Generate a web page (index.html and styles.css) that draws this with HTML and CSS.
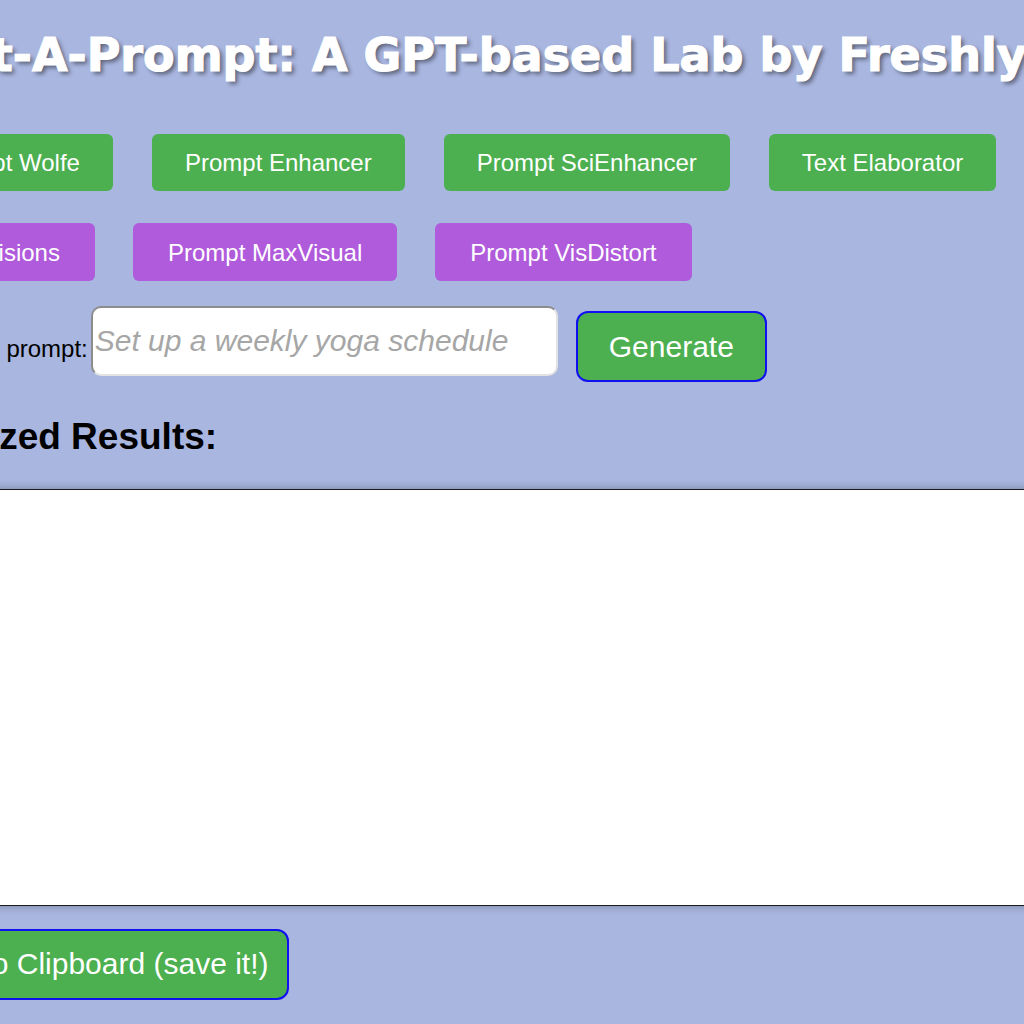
FILE: index.html
```html
<!DOCTYPE html>
<html lang="en">
<head>
  <meta charset="UTF-8" />
  <meta name="viewport" content="width=device-width, initial-scale=1.0"/>
  <title>Prompt-A-Prompt</title>
  <link rel="stylesheet" href="styles.css">
</head>
<body>
  <h1 class="title">Prompt-A-Prompt: A GPT-based Lab by FreshlyAI</h1>

  <div class="tools tools-text">
    <button class="tool-btn green-btn">Prompt Wolfe</button>
    <button class="tool-btn green-btn">Prompt Enhancer</button>
    <button class="tool-btn green-btn">Prompt SciEnhancer</button>
    <button class="tool-btn green-btn">Text Elaborator</button>
  </div>
  <div class="tools tools-visual">
    <button class="tool-btn purple-btn">Prompt Visions</button>
    <button class="tool-btn purple-btn">Prompt MaxVisual</button>
    <button class="tool-btn purple-btn">Prompt VisDistort</button>
  </div>

  <div class="prompt-row">
    <label for="promptInput">Enter your prompt:</label>
    <input type="text" id="promptInput" placeholder="Set up a weekly yoga schedule">
    <button class="generate-btn">Generate</button>
  </div>

  <h2 class="results-title">Optimized Results:</h2>
  <textarea id="results" readonly></textarea>
  <button class="copy-btn">Copy to Clipboard (save it!)</button>
</body>
</html>
```

FILE: styles.css
```css
html, body {
  overflow: hidden;
}
body {
  margin: 0;
  height: 1024px;
  background-color: #a9b6e0;
  font-family: "Liberation Sans", Arial, sans-serif;
}
.title {
  margin: 28px 0 0 -178px;
  white-space: nowrap;
  font-family: "DejaVu Sans", sans-serif;
  font-size: 46px;
  font-weight: bold;
  color: #fff;
  -webkit-text-stroke: 1.2px #fff;
  text-shadow: 3px 3px 4px rgba(0, 0, 0, 0.45);
}
.tools {
  display: flex;
  white-space: nowrap;
}
.tools-text {
  margin: 52px 0 0 -98px;
  gap: 39px;
}
.tools-visual {
  margin: 32px 0 0 -136px;
  gap: 38px;
}
.tool-btn {
  flex: none;
  padding: 15px 33px;
  border: none;
  border-radius: 6px;
  font-family: "Liberation Sans", Arial, sans-serif;
  font-size: 24px;
  line-height: 27px;
  color: #fff;
  cursor: pointer;
}
.green-btn { background-color: #4caf50; }
.purple-btn {
  padding: 16px 35px 15px;
  background-color: #b05bdb;
}

.prompt-row {
  display: flex;
  align-items: flex-start;
  margin: 25px 0 0 -111px;
  white-space: nowrap;
}
.prompt-row label {
  flex: none;
  margin-top: 29px;
  margin-right: 3px;
  font-size: 24px;
  color: #000;
}
#promptInput {
  flex: none;
  box-sizing: border-box;
  width: 467px;
  height: 70px;
  padding: 0 2px;
  border: 2px solid;
  border-color: #8c8c8c #e2e2e2 #e2e2e2 #8c8c8c;
  border-radius: 10px;
  background: #fff;
  font-family: "Liberation Sans", Arial, sans-serif;
  font-size: 30px;
}
#promptInput::placeholder {
  font-style: italic;
  color: #a6a6a6;
}
.generate-btn,
.copy-btn {
  border: 2px solid #1010f0;
  border-radius: 12px;
  background-color: #4caf50;
  color: #fff;
  font-family: "Liberation Sans", Arial, sans-serif;
  font-size: 30px;
  line-height: 34px;
  cursor: pointer;
}
.generate-btn {
  flex: none;
  margin: 5px 0 0 18px;
  padding: 17px 31px 16px;
}
.results-title {
  margin: 34px 0 0 -118px;
  font-size: 37px;
  font-weight: bold;
  white-space: nowrap;
}
#results {
  display: block;
  box-sizing: border-box;
  width: 1300px;
  height: 417px;
  margin: 31px 0 0 -120px;
  border: 1px solid #1a1a1a;
  background: #fff;
  box-shadow: 0 0 9px rgba(0, 0, 0, 0.3);
  resize: none;
}
.copy-btn {
  display: block;
  margin: 23px 0 0 -115px;
  padding: 16px 18px 17px;
  white-space: nowrap;
}
```
